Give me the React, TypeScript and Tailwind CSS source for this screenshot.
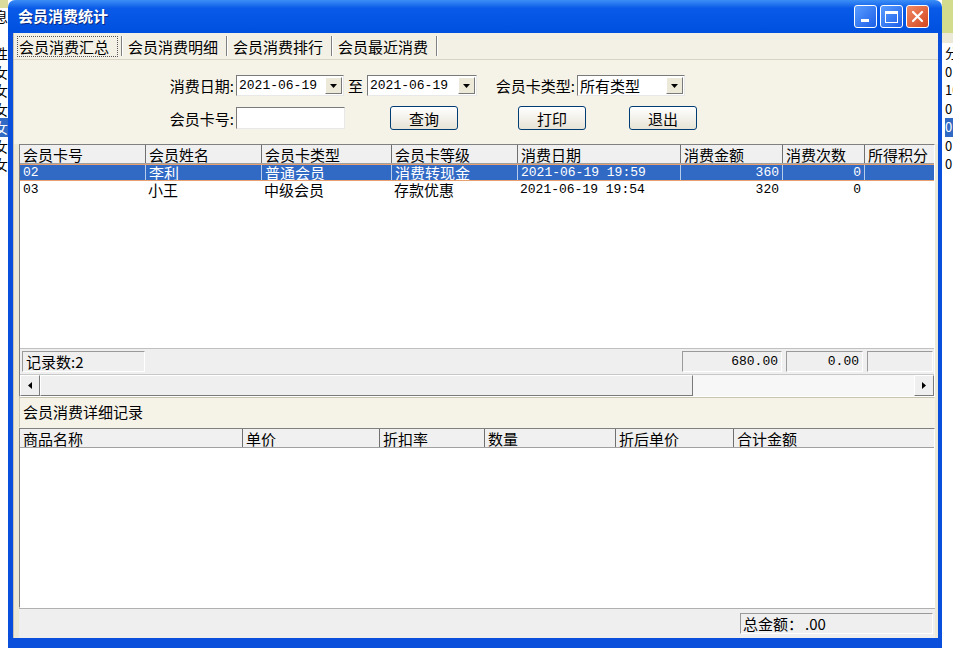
import React from 'react';

const cjk = "font-['Noto_Sans_CJK_SC',sans-serif]";
const mono = "font-['Liberation_Mono','Noto_Sans_CJK_SC',monospace]";

const mainCols = [
  { title: '会员卡号', w: 125 },
  { title: '会员姓名', w: 116 },
  { title: '会员卡类型', w: 130 },
  { title: '会员卡等级', w: 126 },
  { title: '消费日期', w: 163 },
  { title: '消费金额', w: 102 },
  { title: '消费次数', w: 82 },
  { title: '所得积分', w: 70 },
];

const rows = [
  ['02', '李利', '普通会员', '消费转现金', '2021-06-19 19:59', '360', '0', ''],
  ['03', '小王', '中级会员', '存款优惠', '2021-06-19 19:54', '320', '0', ''],
];

const detailCols = [
  { title: '商品名称', w: 222 },
  { title: '单价', w: 137 },
  { title: '折扣率', w: 105 },
  { title: '数量', w: 131 },
  { title: '折后单价', w: 118 },
  { title: '合计金额', w: 190 },
];

const DownArrow = () => (
  <svg width="7" height="4" viewBox="0 0 7 4">
    <path d="M0 0h7L3.5 4z" fill="#000" />
  </svg>
);

const ComboBox = ({ value, width, isMono }: { value: string; width: string; isMono?: boolean }) => (
  <div className={`${width} h-[21px] flex items-stretch bg-white border border-t-[#7a7a7a] border-l-[#7a7a7a] border-b-[#e8e8e8] border-r-[#e8e8e8]`}>
    <div className={`flex-1 flex items-center pl-[2px] leading-none ${isMono ? `${mono} text-[13px]` : 'text-[15px]'}`}>{value}</div>
    <div className="w-[17px] my-[1px] mr-[1px] flex items-center justify-center bg-[#ece9d8] border border-t-white border-l-white border-b-[#7a7a7a] border-r-[#7a7a7a]">
      <DownArrow />
    </div>
  </div>
);

const XpButton = ({ label, ml }: { label: string; ml: string }) => (
  <button className={`${ml} w-[68px] h-[24px] rounded-[3px] border border-[#003c74] bg-linear-to-b from-white to-[#e6e3d6] text-[15px] leading-none flex items-center justify-center`}>
    {label}
  </button>
);

const Inset = ({ className, children }: { className: string; children?: React.ReactNode }) => (
  <div className={`${className} h-[21px] flex items-center leading-none border border-t-[#9a9a9a] border-l-[#9a9a9a] border-b-white border-r-white bg-[#efefef]`}>
    {children}
  </div>
);

const LeftStrip = () => (
  <div className={`w-[8px] h-full relative overflow-hidden bg-white ${cjk} text-[14px]`}>
    <div className="h-[8px] bg-[#d9dc9c]" />
    <div className="absolute left-[-6px] top-[8px] leading-[17px]">息</div>
    <div className="absolute left-[-6px] top-[44px] flex flex-col leading-[18.5px]">
      <span>性</span>
      <span>女</span>
      <span>女</span>
      <span>女</span>
      <span className="bg-[#316ac5] text-white w-[20px]">女</span>
      <span>女</span>
      <span>女</span>
    </div>
  </div>
);

const RightStrip = () => (
  <div className={`flex-1 h-full relative overflow-hidden bg-white ${cjk} text-[13px]`}>
    <div className="h-[33px] bg-[#d3db8c]" />
    <div className="h-[10px] bg-[#ece9d8]" />
    <div className="absolute left-[3px] top-[44px] flex flex-col leading-[18.5px]">
      <span>分</span>
      <span>0</span>
      <span>10</span>
      <span>0</span>
      <span className="bg-[#316ac5] text-white w-[20px]">0</span>
      <span>0</span>
      <span>0</span>
    </div>
  </div>
);

const TitleBar = () => (
  <div className="h-[33px] rounded-t-[7px] bg-linear-to-b from-[#3c8ef7] from-0% via-[#0a5ae8] via-25% to-[#0050e0] flex items-center pl-[10px] pr-[13px]">
    <span className={`${cjk} text-[15px] font-bold text-white [text-shadow:1px_1px_0_#0a2a80]`}>会员消费统计</span>
    <div className="ml-auto flex gap-[3px]">
      <div className="w-[23px] h-[23px] rounded-[3px] border border-white bg-linear-to-br from-[#5a9cff] to-[#1d5ee8] flex items-end justify-start pl-[6px] pb-[5px]">
        <div className="w-[8px] h-[3px] bg-white" />
      </div>
      <div className="w-[23px] h-[23px] rounded-[3px] border border-white bg-linear-to-br from-[#5a9cff] to-[#1d5ee8] flex items-center justify-center">
        <div className="w-[13px] h-[12px] border border-white border-t-[3px]" />
      </div>
      <div className="w-[23px] h-[23px] rounded-[3px] border border-white bg-linear-to-br from-[#f08a63] to-[#d2441c] flex items-center justify-center">
        <svg width="13" height="13" viewBox="0 0 13 13">
          <path d="M2 2l9 9M11 2l-9 9" stroke="#fff" strokeWidth="2.2" strokeLinecap="round" />
        </svg>
      </div>
    </div>
  </div>
);

const Tabs = () => {
  const tabs = ['会员消费汇总', '会员消费明细', '会员消费排行', '会员最近消费'];
  return (
    <div className="h-[27px] flex items-center pl-[3px] bg-[#f3f1e6] border-b border-[#d8d4c4]">
      {tabs.map((t, i) => (
        <div key={t} className="flex items-center">
          <div className={`text-[15px] leading-[19px] pl-[1px] ${i === 0 ? 'pr-[8px] border border-dotted border-[#555]' : 'pr-[4px] border border-transparent'}`}>{t}</div>
          <div className="mx-[3px] w-[2px] h-[20px] border-l border-[#808080] border-r border-r-white" />
        </div>
      ))}
    </div>
  );
};

const FilterPanel = () => (
  <div className="h-[84px] bg-[#f5f3e8] pt-[15px] flex flex-col gap-[10px] text-[15px] leading-none">
    <div className="flex items-center h-[21px]">
      <div className="w-[220px] text-right">消费日期:</div>
      <div className="ml-[2px]"><ComboBox value="2021-06-19" width="w-[108px]" isMono /></div>
      <div className="ml-[4px] w-[16px]">至</div>
      <div className="ml-[3px]"><ComboBox value="2021-06-19" width="w-[110px]" isMono /></div>
      <div className="ml-[13px] w-[85px] text-right">会员卡类型:</div>
      <div className="ml-[2px]"><ComboBox value="所有类型" width="w-[108px]" /></div>
    </div>
    <div className="flex items-center h-[24px]">
      <div className="w-[220px] text-right">会员卡号:</div>
      <div className="ml-[2px] w-[109px] h-[22px] bg-white border border-t-[#7a7a7a] border-l-[#7a7a7a] border-b-[#e8e8e8] border-r-[#e8e8e8]" />
      <XpButton label="查询" ml="ml-[45px]" />
      <XpButton label="打印" ml="ml-[60px]" />
      <XpButton label="退出" ml="ml-[43px]" />
    </div>
  </div>
);

const ScrollArrow = ({ dir }: { dir: 'l' | 'r' }) => (
  <div className="w-[20px] flex items-center justify-center bg-[#efefef] border border-t-white border-l-white border-b-[#7a7a7a] border-r-[#7a7a7a]">
    <svg width="4" height="7" viewBox="0 0 4 7">
      <path d={dir === 'l' ? 'M4 0v7L0 3.5z' : 'M0 0v7L4 3.5z'} fill="#000" />
    </svg>
  </div>
);

const MainGrid = () => (
  <div className="h-[253px] ml-[5px] mr-[3px] flex flex-col border border-t-[#808080] border-l-[#808080] border-b-white border-r-white bg-white">
    <div className="h-[19px] flex bg-[#f0f0f0] border-b border-[#a0a0a0] overflow-hidden">
      {mainCols.map((c, i) => (
        <div key={c.title} style={{ width: c.w }} className={`shrink-0 pl-[3px] text-[15px] leading-none flex items-center ${i > 0 ? 'border-l border-[#707070]' : ''}`}>
          {c.title}
        </div>
      ))}
    </div>
    {rows.map((r, ri) => (
      <div
        key={r[0]}
        className={`h-[17px] flex overflow-hidden ${ri === 0 ? 'bg-[#316ac5] text-white border-y border-[#e8a070]' : 'bg-white'}`}
      >
        {r.map((cell, ci) => {
          const right = ci === 5 || ci === 6;
          const isMono = ci === 0 || ci >= 4;
          return (
            <div
              key={ci}
              style={{ width: mainCols[ci].w }}
              className={`shrink-0 px-[3px] flex items-center leading-none ${isMono ? `${mono} text-[13px]` : 'text-[15px]'} ${right ? 'justify-end' : ''} ${ri === 0 && ci > 0 ? 'border-l border-[#b8cdea]' : ''}`}
            >
              {cell}
            </div>
          );
        })}
      </div>
    ))}
    <div className="flex-1 bg-white" />
    <div className="h-[26px] bg-[#efefef] border-t border-[#c0c0c0] flex items-center pl-[2px] gap-[4px]">
      <Inset className="w-[123px] pl-[3px] text-[15px]">记录数:2</Inset>
      <div className="w-[529px]" />
      <Inset className={`w-[100px] justify-end pr-[3px] ${mono} text-[13px]`}>680.00</Inset>
      <Inset className={`w-[77px] justify-end pr-[3px] ${mono} text-[13px]`}>0.00</Inset>
      <Inset className="flex-1 mr-[1px]" />
    </div>
    <div className="h-[22px] flex bg-[#f7f7f7] border-t border-[#c8c8c8]">
      <ScrollArrow dir="l" />
      <div className="w-[653px] bg-[#efefef] border border-t-white border-l-white border-b-[#7a7a7a] border-r-[#7a7a7a]" />
      <div className="flex-1" />
      <ScrollArrow dir="r" />
    </div>
  </div>
);

const DetailSection = () => (
  <div className="flex-1 ml-[5px] mr-[3px] flex flex-col">
    <div className="h-[31px] bg-[#f5f3e8] border border-t-[#c8c4b4] border-l-[#c8c4b4] border-b-[#f5f3e8] border-r-[#f5f3e8] flex items-center pl-[3px] text-[15px]">
      会员消费详细记录
    </div>
    <div className="flex-1 flex flex-col bg-white border border-t-[#808080] border-l-[#808080] border-b-white border-r-white">
      <div className="h-[19px] flex bg-[#f0f0f0] border-b border-[#a0a0a0]">
        {detailCols.map((c, i) => (
          <div key={c.title} style={{ width: c.w }} className={`shrink-0 pl-[3px] text-[15px] leading-none flex items-center ${i > 0 ? 'border-l border-[#707070]' : ''}`}>
            {c.title}
          </div>
        ))}
      </div>
      <div className="flex-1 bg-white" />
    </div>
    <div className="h-[30px] bg-[#efefef] border-t border-[#b0b0b0] flex items-center justify-end pr-[2px]">
      <Inset className="w-[193px] pl-[2px] text-[15px]">
        <span>总金额：</span>
        <span className="ml-[2px]">.00</span>
      </Inset>
    </div>
  </div>
);

export default function App() {
  return (
    <div className={`w-[953px] h-[655px] flex overflow-hidden bg-white text-black ${cjk}`}>
      <LeftStrip />
      <div className="w-[934px] h-[648px] flex flex-col shrink-0">
        <TitleBar />
        <div className="flex-1 flex bg-[#0a4fdc] pl-[5px] pr-[7px] pb-[10px]">
          <div className="flex-1 flex flex-col bg-[#ece9d8] border-l border-[#c8c4b4]">
            <Tabs />
            <FilterPanel />
            <MainGrid />
            <DetailSection />
          </div>
        </div>
      </div>
      <RightStrip />
    </div>
  );
}
